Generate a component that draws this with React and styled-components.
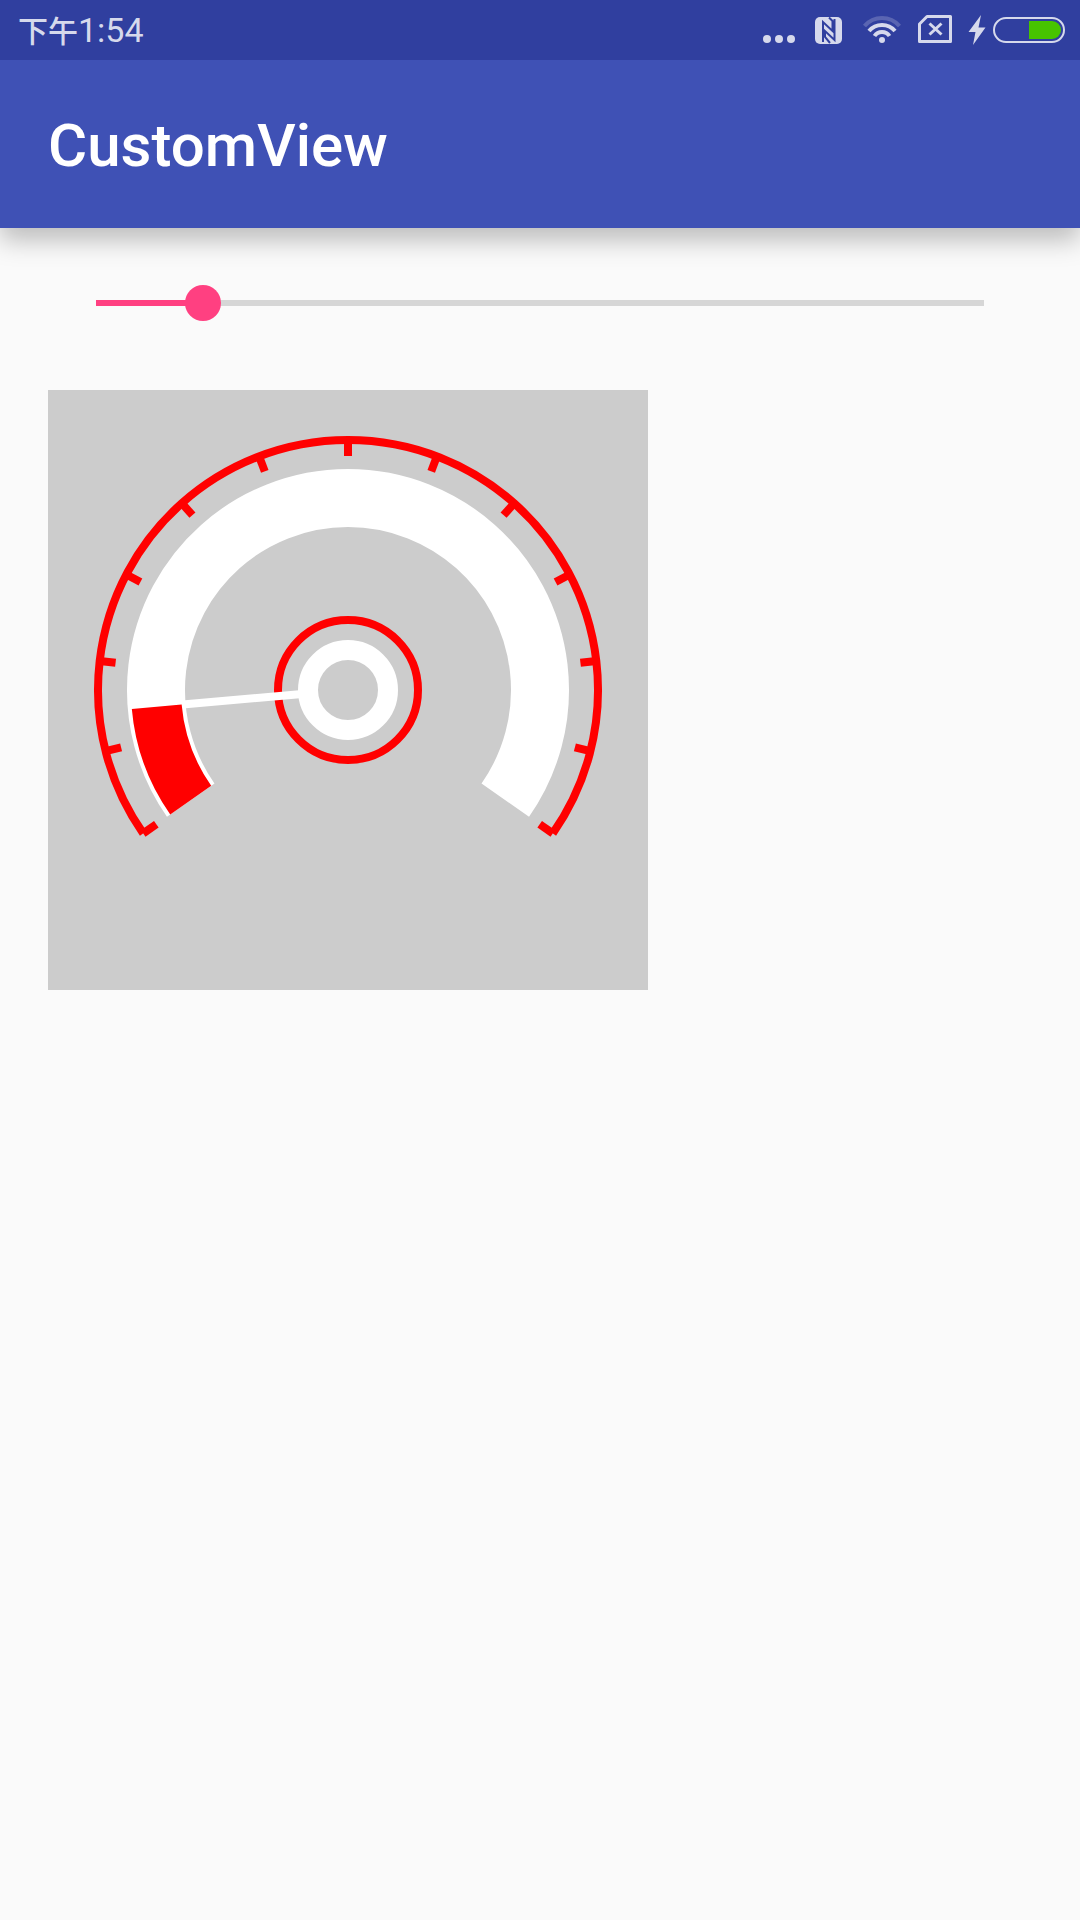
import React, { useState } from "react";
import styled, { createGlobalStyle } from "styled-components";

const color = {
  primaryDark: "#303f9f",
  primary: "#3f51b5",
  accent: "#ff4081",
  status: "#d6d9ec",
  page: "#fafafa",
  track: "#d6d6d6",
  gaugeBg: "#cccccc",
  red: "#ff0000",
};

const GlobalStyle = createGlobalStyle`
  *, *::before, *::after { box-sizing: border-box; }
  body {
    margin: 0;
    background: ${color.page};
    font-family: Roboto, "Noto Sans CJK SC", sans-serif;
  }
`;

const Screen = styled.div`
  display: flex;
  flex-direction: column;
  min-height: 100vh;
`;

const StatusBar = styled.div`
  z-index: 1;
  display: flex;
  align-items: center;
  justify-content: space-between;
  height: 60px;
  padding: 0 15px 0 18px;
  background: ${color.primaryDark};
  color: ${color.status};
`;

const Clock = styled.time`
  padding-top: 2px;
  font-size: 34px;
  line-height: 60px;
`;

const Meridiem = styled.span`
  font-size: 30px;
  font-weight: 500;
`;

const StatusIcons = styled.div`
  display: flex;
  align-items: center;
  gap: 16px;
`;

const Power = styled.div`
  display: flex;
  align-items: center;
  gap: 7px;
`;

const Icon = styled.svg`
  display: block;
  flex: none;
`;

const AppBar = styled.header`
  display: flex;
  align-items: center;
  height: 168px;
  padding: 4px 48px 0;
  background: ${color.primary};
  box-shadow: 0 12px 24px rgba(0, 0, 0, 0.25);
`;

const Title = styled.h1`
  margin: 0;
  color: #fff;
  font-size: 60px;
  font-weight: 500;
  line-height: 72px;
`;

const Content = styled.main`
  display: flex;
  flex-direction: column;
  align-items: flex-start;
  gap: 60px;
  padding: 48px;
`;

const SliderRow = styled.div`
  display: flex;
  width: 100%;
  padding: 9px 30px;
`;

const Slider = styled.input`
  appearance: none;
  flex: 1;
  min-width: 0;
  height: 36px;
  margin: 0;
  cursor: pointer;
  background: linear-gradient(
      to right,
      ${color.accent} var(--level),
      ${color.track} var(--level)
    )
    center / calc(100% - 36px) 6px no-repeat;

  &::-webkit-slider-thumb {
    appearance: none;
    width: 36px;
    height: 36px;
    border-radius: 50%;
    background: ${color.accent};
  }
`;

const GaugePanel = styled.svg`
  display: block;
  width: 600px;
  max-width: 100%;
  background: ${color.gaugeBg};
`;

const CENTER = 300;
const START = 145;
const SWEEP = 250;
const STEPS = 12;

function point(radius, degrees) {
  const a = (degrees * Math.PI) / 180;
  return [CENTER + radius * Math.cos(a), CENTER + radius * Math.sin(a)];
}

function arc(radius, sweep) {
  const [x1, y1] = point(radius, START);
  const [x2, y2] = point(radius, START + sweep);
  return `M${x1} ${y1}A${radius} ${radius} 0 ${sweep > 180 ? 1 : 0} 1 ${x2} ${y2}`;
}

function Ray({ from, to, degrees, stroke }) {
  const [x1, y1] = point(from, degrees);
  const [x2, y2] = point(to, degrees);
  return <line x1={x1} y1={y1} x2={x2} y2={y2} stroke={stroke} strokeWidth="8" />;
}

function Gauge({ value }) {
  const sweep = (SWEEP * value) / 100;
  return (
    <GaugePanel viewBox="0 0 600 600" fill="none" role="img" aria-label="Gauge">
      <path d={arc(250, SWEEP)} stroke={color.red} strokeWidth="8" />
      {Array.from({ length: STEPS + 1 }, (_, i) => (
        <Ray key={i} from={250} to={234} degrees={START + (SWEEP / STEPS) * i} stroke={color.red} />
      ))}
      <path d={arc(192, SWEEP)} stroke="#fff" strokeWidth="58" />
      <path d={arc(192, sweep)} stroke={color.red} strokeWidth="50" />
      <circle cx={CENTER} cy={CENTER} r="70" stroke={color.red} strokeWidth="8" />
      <circle cx={CENTER} cy={CENTER} r="40" stroke="#fff" strokeWidth="20" />
      <Ray from={46} to={166} degrees={START + sweep} stroke="#fff" />
    </GaugePanel>
  );
}

function MoreIcon() {
  return (
    <Icon width="36" height="30" viewBox="0 0 36 30" fill="currentColor">
      <circle cx="4" cy="24" r="4" />
      <circle cx="16" cy="24" r="4" />
      <circle cx="28" cy="24" r="4" />
    </Icon>
  );
}

function NfcIcon() {
  return (
    <Icon width="30" height="30" viewBox="0 0 30 30">
      <rect y="2" width="27" height="27" rx="5" fill="currentColor" />
      <path
        d="M8 27V7L17.500 16V6L14 2.500M19.500 4V25L10 16V22L15 28"
        fill="none"
        stroke={color.primaryDark}
        strokeWidth="2"
      />
    </Icon>
  );
}

function WifiIcon() {
  return (
    <Icon width="41" height="30" viewBox="0 0 41 30" fill="none" stroke="currentColor" strokeWidth="4">
      <path d="M3.500 11A23 23 0 0 1 38.500 11" opacity="0.25" />
      <path d="M8 16A17 17 0 0 1 34 16" />
      <path d="M13.500 21A9 9 0 0 1 28.500 21" />
      <circle cx="21" cy="25" r="3" fill="currentColor" stroke="none" />
    </Icon>
  );
}

function NoSimIcon() {
  return (
    <Icon width="34" height="30" viewBox="0 0 34 30" fill="none" stroke="currentColor">
      <path d="M9 1.500H32.500V26.500H1.500V9Z" strokeWidth="3" strokeLinejoin="round" />
      <path d="M11.500 8.500L23.500 19.500M23.500 8.500L11.500 19.500" strokeWidth="3" />
    </Icon>
  );
}

function BoltIcon() {
  return (
    <Icon width="18" height="30" viewBox="0 0 18 30" fill="currentColor">
      <path d="M13 0L0.500 17H7.500L5 30L17.500 12.500H10.500Z" />
    </Icon>
  );
}

function BatteryIcon() {
  return (
    <Icon width="72" height="30" viewBox="0 0 72 30" fill="none">
      <rect x="1" y="3" width="70" height="24" rx="12" stroke="currentColor" strokeWidth="2" />
      <path d="M36 6H59A9 9 0 0 1 59 24H36Z" fill="#47c400" />
    </Icon>
  );
}

export default function App() {
  const [value, setValue] = useState(12);
  return (
    <Screen>
      <GlobalStyle />
      <StatusBar>
        <Clock dateTime="13:54">
          <Meridiem>下午</Meridiem>1:54
        </Clock>
        <StatusIcons>
          <MoreIcon />
          <NfcIcon />
          <WifiIcon />
          <NoSimIcon />
          <Power>
            <BoltIcon />
            <BatteryIcon />
          </Power>
        </StatusIcons>
      </StatusBar>
      <AppBar>
        <Title>CustomView</Title>
      </AppBar>
      <Content>
        <SliderRow>
          <Slider
            type="range"
            min="0"
            max="100"
            value={value}
            aria-label="Gauge value"
            onChange={(e) => setValue(Number(e.target.value))}
            style={{ "--level": `${value}%` }}
          />
        </SliderRow>
        <Gauge value={value} />
      </Content>
    </Screen>
  );
}
